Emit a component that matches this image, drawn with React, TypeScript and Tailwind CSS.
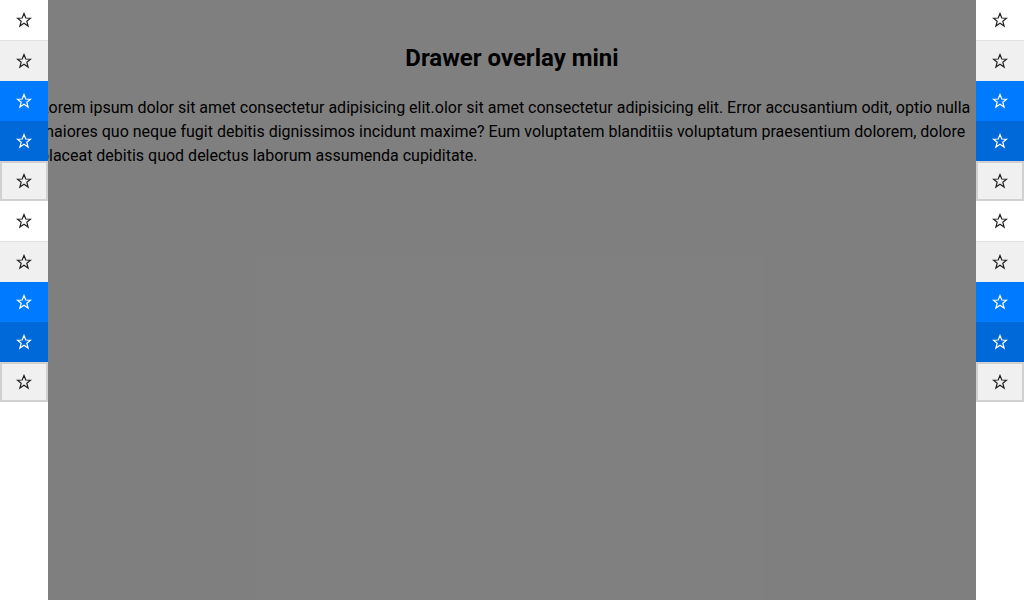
const rows = [
  "bg-white border-b border-[#e0e0e0] text-[#222] h-[41px]",
  "bg-[#f0f0f0] text-[#222] h-10",
  "bg-[#007bff] text-white h-10",
  "bg-[#0069d9] text-white h-10",
  "bg-[#f0f0f0] border-2 border-[#d0d0d0] text-[#222] h-10",
]

const text =
  "Lorem ipsum dolor sit amet consectetur adipisicing elit.olor sit amet consectetur adipisicing elit. Error accusantium odit, optio nulla maiores quo neque fugit debitis dignissimos incidunt maxime? Eum voluptatem blanditiis voluptatum praesentium dolorem, dolore placeat debitis quod delectus laborum assumenda cupiditate."

// outline star, sharp joins
function StarIcon() {
  return (
    <svg width="16" height="16" viewBox="0 0 16 16" fill="none" stroke="currentColor" strokeWidth="1.2" strokeLinejoin="miter">
      <polygon points="8,1.5 9.8,6 14.5,6.2 10.8,9.2 12.1,14 8,11.2 3.9,14 5.2,9.2 1.5,6.2 6.2,6" />
    </svg>
  )
}

function MiniDrawer({ side }: { side: "left" | "right" }) {
  return (
    <aside
      className={
        "absolute top-0 bottom-0 z-20 w-12 bg-white flex flex-col " +
        (side === "left" ? "left-0" : "right-0")
      }
    >
      {[0, 1].map((g) =>
        rows.map((cls, i) => (
          <button key={`${g}-${i}`} className={"w-full flex items-center justify-center " + cls}>
            <StarIcon />
          </button>
        )),
      )}
    </aside>
  )
}

export default function App() {
  return (
    <div className="relative h-screen w-full overflow-hidden bg-white font-['Roboto',sans-serif] text-black">
      <main className="px-10 pt-[42px]">
        <h1 className="text-center text-2xl leading-8 font-bold mb-[22px]">Drawer overlay mini</h1>
        <p className="text-base leading-6">{text}</p>
      </main>

      {/* overlay */}
      <div className="absolute inset-0 z-10 bg-black/50" />

      <MiniDrawer side="left" />
      <MiniDrawer side="right" />
    </div>
  )
}
